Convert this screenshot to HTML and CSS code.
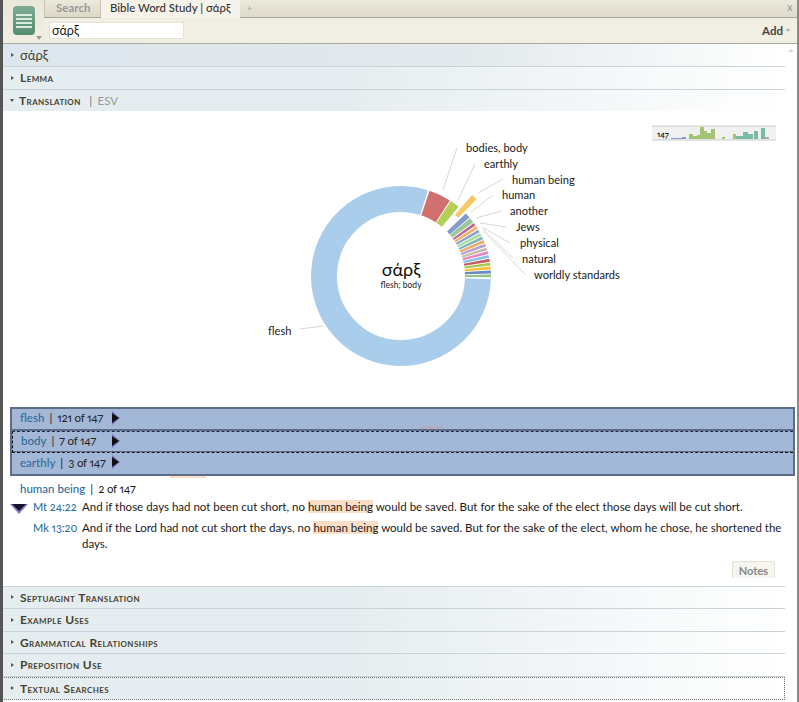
FILE: index.html
```html
<!DOCTYPE html>
<html lang="en">
<head>
<meta charset="utf-8">
<title>Bible Word Study</title>
<link rel="stylesheet" href="styles.css">
</head>
<body>
<div class="window">
  <header class="top">
    <div class="menu-col">
      <div class="menu-btn"><span></span><span></span><span></span><span></span></div>
      <i class="menu-caret"></i>
    </div>
    <div class="top-main">
      <div class="tabs">
        <div class="tab">Search</div>
        <div class="tab active">Bible Word Study | σάρξ</div>
        <div class="tab-add">+</div>
        <div class="tab-close">x</div>
      </div>
      <div class="toolbar">
        <div class="search">σάρξ</div>
        <div class="add">Add <i></i></div>
      </div>
    </div>
  </header>
  <main class="content">
    <i class="scroll-up"></i>
    <div class="sec first"><i class="tri"></i><span class="greek">σάρξ</span></div>
    <div class="sec"><i class="tri"></i>Lemma</div>
    <div class="sec open"><i class="tri down"></i>Translation <em>|</em> <b>ESV</b></div>
    <div class="chart">
      <svg class="donut" viewBox="0 0 780 290" width="780" height="290">
        <g class="leaders">
          <line x1="457" y1="31" x2="443" y2="73"/>
          <line x1="475" y1="47" x2="458" y2="83"/>
          <line x1="503" y1="62" x2="478" y2="76"/>
          <line x1="493" y1="78" x2="471" y2="95"/>
          <line x1="502" y1="94" x2="476" y2="101"/>
          <line x1="506" y1="110" x2="480" y2="106"/>
          <line x1="510" y1="126" x2="482" y2="110"/>
          <line x1="513" y1="141" x2="483" y2="112"/>
          <line x1="526" y1="158" x2="483" y2="114"/>
          <line x1="300" y1="212" x2="323" y2="209"/>
        </g>
        <g class="ring">
          <circle pathLength="360" stroke="#abcdec" stroke-dasharray="285.5 360" transform="rotate(2 401 159)"/>
          <circle pathLength="360" stroke="#d0706f" stroke-dasharray="14.5 360" transform="rotate(288.5 401 159)"/>
          <circle pathLength="360" stroke="#b4cf55" stroke-dasharray="6.3 360" transform="rotate(303.6 401 159)"/>
          <circle pathLength="360" stroke="#f5c862" stroke-dasharray="4 360" transform="translate(12 -13) rotate(311 401 159)"/>
          <circle pathLength="360" stroke="#7f9acb" stroke-dasharray="3.6 360" transform="rotate(316 401 159)"/>
          <circle pathLength="360" stroke="#9cc79c" stroke-dasharray="3.4 360" transform="rotate(320 401 159)"/>
          <circle pathLength="360" stroke="#c0688e" stroke-dasharray="1.9 360" transform="rotate(324 401 159)"/>
          <circle pathLength="360" stroke="#f2b268" stroke-dasharray="1.9 360" transform="rotate(326.5 401 159)"/>
          <circle pathLength="360" stroke="#8ca3cc" stroke-dasharray="1.9 360" transform="rotate(329 401 159)"/>
          <circle pathLength="360" stroke="#a4dca2" stroke-dasharray="1.9 360" transform="rotate(331.5 401 159)"/>
          <circle pathLength="360" stroke="#82b3b5" stroke-dasharray="1.9 360" transform="rotate(334 401 159)"/>
          <circle pathLength="360" stroke="#eeaa6a" stroke-dasharray="1.9 360" transform="rotate(336.5 401 159)"/>
          <circle pathLength="360" stroke="#b2a3d3" stroke-dasharray="1.9 360" transform="rotate(339 401 159)"/>
          <circle pathLength="360" stroke="#c9bba4" stroke-dasharray="1.9 360" transform="rotate(341.5 401 159)"/>
          <circle pathLength="360" stroke="#e384c4" stroke-dasharray="1.9 360" transform="rotate(344 401 159)"/>
          <circle pathLength="360" stroke="#84c2ea" stroke-dasharray="1.9 360" transform="rotate(346.5 401 159)"/>
          <circle pathLength="360" stroke="#c85c5c" stroke-dasharray="1.9 360" transform="rotate(349 401 159)"/>
          <circle pathLength="360" stroke="#a9c94f" stroke-dasharray="1.9 360" transform="rotate(351.5 401 159)"/>
          <circle pathLength="360" stroke="#f8c23f" stroke-dasharray="1.9 360" transform="rotate(354 401 159)"/>
          <circle pathLength="360" stroke="#6a8ac2" stroke-dasharray="1.9 360" transform="rotate(356.5 401 159)"/>
          <circle pathLength="360" stroke="#93c28a" stroke-dasharray="1.9 360" transform="rotate(359 401 159)"/>
        </g>
        <g class="labels">
          <text x="466" y="35">bodies, body</text>
          <text x="484" y="51">earthly</text>
          <text x="512" y="67">human being</text>
          <text x="502" y="82">human</text>
          <text x="510" y="98">another</text>
          <text x="516" y="114">Jews</text>
          <text x="520" y="130">physical</text>
          <text x="522" y="146">natural</text>
          <text x="534" y="162">worldly standards</text>
          <text x="268" y="218">flesh</text>
        </g>
        <text class="center-word" x="401" y="159">σάρξ</text>
        <text class="center-sub" x="401" y="171">flesh; body</text>
        <g class="spark">
          <rect class="spark-bg" x="652" y="9" width="124" height="14"/>
          <line class="spark-top" x1="652" y1="9" x2="776" y2="9"/>
          <line class="spark-top" x1="652" y1="23" x2="776" y2="23"/>
          <text x="657" y="20">147</text>
          <path fill="#8b9bd0" d="M671 21h11v1h-11zM682 20h4v2h-4z"/>
          <path fill="#a2c373" d="M689 17h4v5h-4zM693 19h4v3h-4zM697 18h3v4h-3zM700 10h4v12h-4zM704 14h3v8h-3zM707 16h4v6h-4zM711 12h4v10h-4zM722 20h3v2h-3zM733 17h3v5h-3z"/>
          <path fill="#79bba5" d="M736 19h7v3h-7zM743 15h5v7h-5zM748 17h5v5h-5zM754 14h4v8h-4zM761 11h4v11h-4z"/>
          <rect fill="#c89ac0" x="765" y="20" width="4" height="2"/>
        </g>
      </svg>
    </div>
    <div class="bars-wrap">
      <div class="peek"></div>
      <div class="bars">
        <div class="bar"><a>flesh</a><span class="pipe">|</span><span class="count">121 of 147</span><i class="arrow"></i><i class="tint"></i></div>
        <div class="bar dashed"><a>body</a><span class="pipe">|</span><span class="count">7 of 147</span><i class="arrow"></i></div>
        <div class="bar"><a>earthly</a><span class="pipe">|</span><span class="count">3 of 147</span><i class="arrow"></i></div>
      </div>
    </div>
    <div class="study">
      <div class="head"><a>human being</a><span class="pipe">|</span><span class="count">2 of 147</span></div>
      <i class="collapse"></i>
      <div class="verse"><a>Mt 24:22</a><p>And if those days had not been cut short, no <mark>human being</mark> would be saved. But for the sake of the elect those days will be cut short.</p></div>
      <div class="verse"><a>Mk 13:20</a><p>And if the Lord had not cut short the days, no <mark>human being</mark> would be saved. But for the sake of the elect, whom he chose, he shortened the days.</p></div>
      <div class="notes-row"><span class="notes">Notes</span></div>
    </div>
    <div class="sec"><i class="tri"></i>Septuagint Translation</div>
    <div class="sec"><i class="tri"></i>Example Uses</div>
    <div class="sec"><i class="tri"></i>Grammatical Relationships</div>
    <div class="sec"><i class="tri"></i>Preposition Use</div>
    <div class="sec focus"><i class="tri"></i>Textual Searches</div>
  </main>
</div>
</body>
</html>
```
FILE: styles.css
```css
* { box-sizing: border-box; }
html, body { margin: 0; height: 100%; overflow: hidden; }
body { font-family: Lato, "Open Sans", sans-serif; color: #1a1a1a; background: #fff; font-feature-settings: "onum", "pnum"; }
.window { width: 799px; height: 702px; border-left: 3px solid #555; border-right: 2px solid #8a8a86; display: flex; flex-direction: column; overflow: hidden; }
.top { height: 44px; display: flex; background: #f1efe4; border-bottom: 1px solid #aaa899; flex: none; }
.menu-col { width: 41px; position: relative; padding: 6px 0 0 10px; background: linear-gradient(#e9e7da, #f1efe4); }
.menu-btn { width: 22px; height: 29px; border-radius: 4px; background: linear-gradient(#7dab91, #548d72); display: flex; flex-direction: column; justify-content: center; gap: 2px; padding: 0 3px; }
.menu-btn span { height: 2px; background: #dce9e0; }
.menu-caret { position: absolute; left: 33px; top: 36px; border: 3px solid transparent; border-top: 4px solid #999; border-bottom: 0; }
.top-main { flex: 1; display: flex; flex-direction: column; }
.tabs { height: 18px; display: flex; align-items: stretch; background: linear-gradient(#ece9dd, #dedbcc); border-bottom: 1px solid #a8a695; font-size: 12px; }
.tab { width: 57px; padding: 0 11px; line-height: 15px; color: #999; background: linear-gradient(#ece9dc, #dcd9c9); border: 1px solid #c8c5b5; border-width: 0 1px; font-weight: 700; font-size: 11.5px; }
.tab.active { width: auto; height: 18px; color: #333; background: #f6f4ea; padding: 0 9px; border: 0; font-weight: 500; font-size: 11.4px; }
.tab-add { width: 20px; color: #aaa; text-align: center; line-height: 15px; font-size: 10px; }
.tab-close { margin-left: auto; width: 10px; color: #999; font-size: 11px; line-height: 13px; }
.toolbar { flex: 1; display: flex; align-items: center; justify-content: space-between; padding: 0 7px 0 5px; }
.search { width: 135px; height: 17px; background: #fff; border: 1px solid #e4e2d4; font-size: 12.5px; line-height: 15px; padding-left: 2px; }
.add { font-size: 11.5px; font-weight: 700; color: #444; display: flex; align-items: center; gap: 3px; }
.add i { border: 2.5px solid transparent; border-top: 3px solid #aaa; border-bottom: 0; }
.content { flex: 1; display: flex; flex-direction: column; min-height: 0; position: relative; }
.scroll-up { position: absolute; left: 785px; top: 5px; border: 3px solid transparent; border-bottom: 3px solid #d6d6d6; border-top: 0; }
.sec { width: 782px; height: 22.5px; flex: none; display: flex; align-items: center; font-variant: small-caps; font-size: 12px; font-weight: 700; letter-spacing: .4px; color: #45422f; background: linear-gradient(90deg, #e6edf0 0, #e6edf0 45%, #fff 100%); border-bottom: 1px solid #c9d4d6; padding-left: 8px; white-space: pre; }
.sec.first { height: 23px; background: linear-gradient(90deg, #dde6ee 0, #e3e9ec 60%, #fff 100%); }
.sec.open { border-bottom: 0; height: 21px; }
.sec.focus { border: 1px dotted #777; height: 23px; margin-left: -3px; width: 785px; padding-left: 10px; }
.sec .greek { font-variant: normal; font-weight: 400; font-size: 13px; letter-spacing: 0; }
.sec em { font-style: normal; font-weight: 400; color: #777; margin: 0 5px; }
.sec b { font-variant: normal; font-weight: 400; color: #999; font-size: 11.5px; letter-spacing: 0; }
.tri { width: 0; height: 0; border: 2.5px solid transparent; border-left: 3.5px solid #555; border-right: 0; margin-right: 6px; }
.tri.down { border: 2.5px solid transparent; border-top: 3.5px solid #555; border-bottom: 0; margin-right: 5px; margin-left: -1px; }
.chart { height: 296px; flex: none; padding-top: 6px; }
.donut { display: block; margin-left: -3px; }
.leaders line { stroke: #d8d8d8; stroke-width: 1; }
.ring circle { cx: 401px; cy: 159px; r: 77px; fill: none; stroke-width: 26; }
.labels text { font-size: 11.1px; fill: #1a1a1a; }
.center-word { font-size: 18px; text-anchor: middle; fill: #111; }
.center-sub { font-size: 8.5px; text-anchor: middle; fill: #222; }
.spark-bg { fill: #f0f0f0; }
.spark-top { stroke: #ccc; }
.spark text { font-size: 8px; fill: #222; font-weight: 700; }
.bars-wrap { height: 71px; flex: none; position: relative; }
.peek { position: absolute; left: 167px; top: 68px; width: 36px; height: 3px; background: #fadfc6; }
.bars { position: absolute; left: 7px; top: 0; width: 785px; height: 69px; display: flex; flex-direction: column; background: #a3b7d6; border: 2px solid #5d6c88; }
.bar { flex: 1; display: flex; align-items: center; padding: 0 0 2px 8px; font-size: 11.5px; color: #222; white-space: pre; border-bottom: 2px solid #5d6c88; position: relative; }
.bar:last-child { border-bottom: 0; }
.bar.dashed { border-left: 1px dashed #111; border-top: 1px dashed #1a2a45; border-bottom: 1px dashed #111; box-shadow: inset 0 -1px #5d6c88; padding-left: 8px; }
.bar a, .head a { color: #2f6c9b; font-weight: 500; }
.pipe { margin: 0 5px; }
.count { letter-spacing: -.2px; }
.arrow { position: absolute; left: 100px; top: 2px; border: 7.5px solid transparent; border-left: 8px solid #7d74c4; border-right: 0; }
.dashed .arrow { left: 99px; }
.arrow::after { content: ""; position: absolute; left: -8px; top: -5px; border: 5px solid transparent; border-left: 7px solid #111; border-right: 0; }
.tint { position: absolute; left: 407px; top: 17px; width: 24px; height: 3px; background: rgba(190, 160, 160, .4); }
.study { flex: none; height: 109px; position: relative; padding-left: 17px; font-size: 11.5px; border-bottom: 1px solid #c9d4d6; width: 782px; }
.head { height: 21px; line-height: 22px; white-space: pre; display: flex; }
.collapse { position: absolute; left: 7px; top: 26px; border: 9px solid transparent; border-top: 10px solid #8578c9; border-bottom: 0; }
.collapse::after { content: ""; position: absolute; left: -7px; top: -10px; border: 7px solid transparent; border-top: 7px solid #15122c; border-bottom: 0; }
.verse { display: grid; grid-template-columns: 49px 1fr; padding-left: 13px; margin-bottom: 5px; line-height: 16px; }
.verse a { color: #2f7199; font-weight: 500; font-size: 11px; }
.verse p { margin: 0; }
.verse mark { background: #fadfc6; color: inherit; }
.notes-row { display: flex; justify-content: flex-end; padding-right: 10px; margin-top: 9px; }
.notes { background: #f6f5ef; border: 1px solid #e3e1d6; border-bottom: 0; border-radius: 3px 3px 0 0; color: #888; font-weight: 700; font-size: 11px; height: 17px; padding: 0 6px; line-height: 18px; }
```
